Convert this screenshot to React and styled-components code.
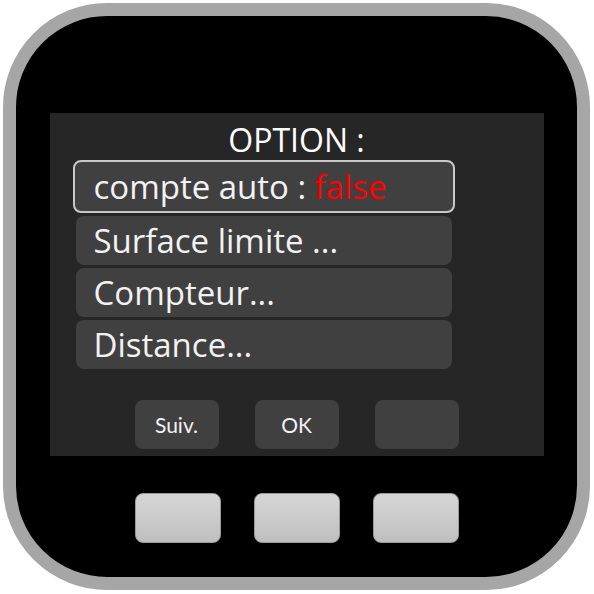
import React from 'react';
import styled, { createGlobalStyle } from 'styled-components';

const GlobalStyle = createGlobalStyle`
  html, body {
    margin: 0;
    padding: 0;
    background: #ffffff;
  }
  body {
    font-family: 'Open Sans', 'Lato', sans-serif;
  }
`;

const Device = styled.div`
  box-sizing: border-box;
  width: 587px;
  height: 587px;
  margin: 3px;
  border: 13px solid #a6a6a6;
  border-radius: 104px;
  background: #000000;
  padding: 97px 33px 0;
  display: flex;
  flex-direction: column;
  align-items: center;
`;

const Screen = styled.div`
  box-sizing: border-box;
  width: 494px;
  height: 343px;
  background: #262626;
  padding: 9px 26px 0;
  display: flex;
  flex-direction: column;
`;

const Title = styled.div`
  height: 36px;
  line-height: 36px;
  font-size: 32px;
  color: #ffffff;
  text-align: center;
  margin-bottom: 2px;
`;

const Menu = styled.div`
  width: 376px;
  display: flex;
  flex-direction: column;
  gap: 3px;
`;

const Row = styled.div`
  box-sizing: border-box;
  height: ${({ $selected }) => ($selected ? '53px' : '49px')};
  margin: ${({ $selected }) => ($selected ? '0 -3px' : '0')};
  padding-left: ${({ $selected }) => ($selected ? '19px' : '18px')};
  border: ${({ $selected }) => ($selected ? '2px solid #c8c8c8' : 'none')};
  border-radius: 8px;
  background: #404040;
  color: #f2f2f2;
  font-size: 33px;
  display: flex;
  align-items: center;
  white-space: nowrap;
`;

const Value = styled.span`
  color: #ff0000;
  margin-left: 0.25em;
`;

const SoftKeys = styled.div`
  display: flex;
  justify-content: center;
  gap: 36px;
  margin-top: 31px;
`;

const SoftKey = styled.div`
  width: 84px;
  height: 49px;
  border-radius: 8px;
  background: #404040;
  color: #f2f2f2;
  font-family: 'Lato', sans-serif;
  font-size: 21px;
  display: flex;
  align-items: center;
  justify-content: center;
`;

const Keys = styled.div`
  display: flex;
  gap: 33px;
  margin-top: 37px;
`;

const Key = styled.div`
  box-sizing: border-box;
  width: 86px;
  height: 50px;
  border: 1px solid #9a9a9a;
  border-radius: 8px;
  background: linear-gradient(#d6d6d6, #bfbfbf);
`;

const items = ['Surface limite ...', 'Compteur...', 'Distance...'];

export default function App() {
  return (
    <>
      <GlobalStyle />
      <Device>
        <Screen>
          <Title>OPTION :</Title>
          <Menu>
            <Row $selected>
              compte auto :<Value>false</Value>
            </Row>
            {items.map((label) => (
              <Row key={label}>{label}</Row>
            ))}
          </Menu>
          <SoftKeys>
            <SoftKey>Suiv.</SoftKey>
            <SoftKey>OK</SoftKey>
            <SoftKey />
          </SoftKeys>
        </Screen>
        <Keys>
          <Key />
          <Key />
          <Key />
        </Keys>
      </Device>
    </>
  );
}
